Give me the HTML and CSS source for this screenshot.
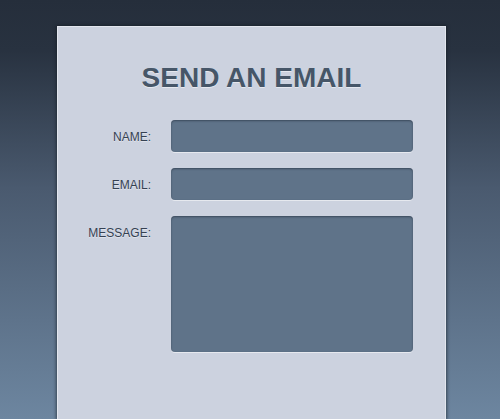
FILE: index.html
```html
<!DOCTYPE html>
<html>
<head>
<meta charset="utf-8">
<link rel="stylesheet" href="styles.css">
</head>
<body>
<div class="card">
  <h1 class="title">SEND AN EMAIL</h1>
  <form class="form">
    <label class="label" for="name">NAME:</label>
    <input class="field" id="name" type="text">
    <label class="label" for="email">EMAIL:</label>
    <input class="field" id="email" type="text">
    <label class="label" for="msg">MESSAGE:</label>
    <textarea class="field area" id="msg"></textarea>
  </form>
</div>
</body>
</html>
```

FILE: styles.css
```css
html, body {
  margin: 0;
  height: 100%;
}
body {
  background: linear-gradient(to bottom, #252e3b 0%, #283240 12%, #4a5a6f 45%, #6d86a0 100%);
  font-family: "Liberation Sans", Arial, sans-serif;
  overflow: hidden;
}
.card {
  box-sizing: border-box;
  margin: 26px 0 0 57px;
  width: 389px;
  height: calc(100vh - 26px);
  background: #ccd2df;
  border: 1px solid #e2e6ee;
  border-bottom: none;
  box-shadow: 0 0 3px 1px rgba(20, 26, 36, 0.6);
}
.title {
  margin: 0;
  padding-top: 35px;
  height: 58px;
  text-align: center;
  font-size: 28px;
  font-weight: bold;
  color: #465668;
  text-shadow: 0 1px 0 rgba(255, 255, 255, 0.5);
  line-height: 32px;
}
.form {
  display: grid;
  grid-template-columns: 93px 242px;
  column-gap: 20px;
  row-gap: 16px;
}
.label {
  text-align: right;
  font-size: 12px;
  height: 32px;
  line-height: 34px;
  color: #354152;
  text-shadow: 0 1px 0 rgba(255, 255, 255, 0.4);
}
.field {
  box-sizing: border-box;
  width: 242px;
  height: 32px;
  margin: 0;
  padding: 0;
  border: none;
  border-radius: 4px;
  background: #5f7389;
  box-shadow: inset 0 1px 2px rgba(30, 40, 55, 0.55), 0 1px 0 rgba(255, 255, 255, 0.5);
  resize: none;
  outline: none;
}
.area {
  height: 136px;
  display: block;
}
```
